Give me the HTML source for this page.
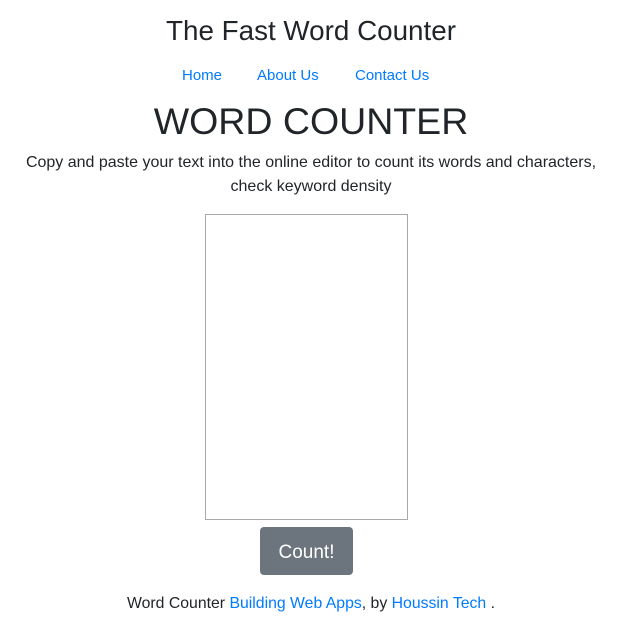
<!DOCTYPE html>
<html><head><meta charset="utf-8"><style>
body{margin:0;width:622px;height:625px;background:#fff;font-family:"Liberation Sans",sans-serif;color:#212529;position:relative;overflow:hidden}
.a{position:absolute;left:0;width:622px;text-align:center;white-space:nowrap}
a{color:#007bff;text-decoration:none}
</style></head><body>
<div class="a" style="top:14px;font-size:27.8px;font-weight:500;line-height:34px">The Fast Word Counter</div>
<div class="a" style="top:66px;font-size:15px;line-height:20px"><a style="position:absolute;left:182px">Home</a><a style="position:absolute;left:257px">About Us</a><a style="position:absolute;left:355px">Contact Us</a></div>
<div class="a" style="top:97px;font-size:37.5px;font-weight:500;line-height:48px">WORD COUNTER</div>
<div class="a" style="top:151px;font-size:16px;line-height:24px">Copy and paste your text into the online editor to count its words and characters,<br>check keyword density</div>
<div style="position:absolute;left:205px;top:214px;width:201px;height:304px;border:1px solid #a9a9a9"></div>
<div style="position:absolute;left:260px;top:527px;width:93px;height:48px;background:#6c757d;border-radius:4px;color:#fff;font-size:19px;line-height:52px;text-align:center">Count!</div>
<div class="a" style="top:594px;font-size:15.8px;line-height:20px">Word Counter <a>Building Web Apps</a>, by <a>Houssin Tech</a> .</div>
</body></html>
